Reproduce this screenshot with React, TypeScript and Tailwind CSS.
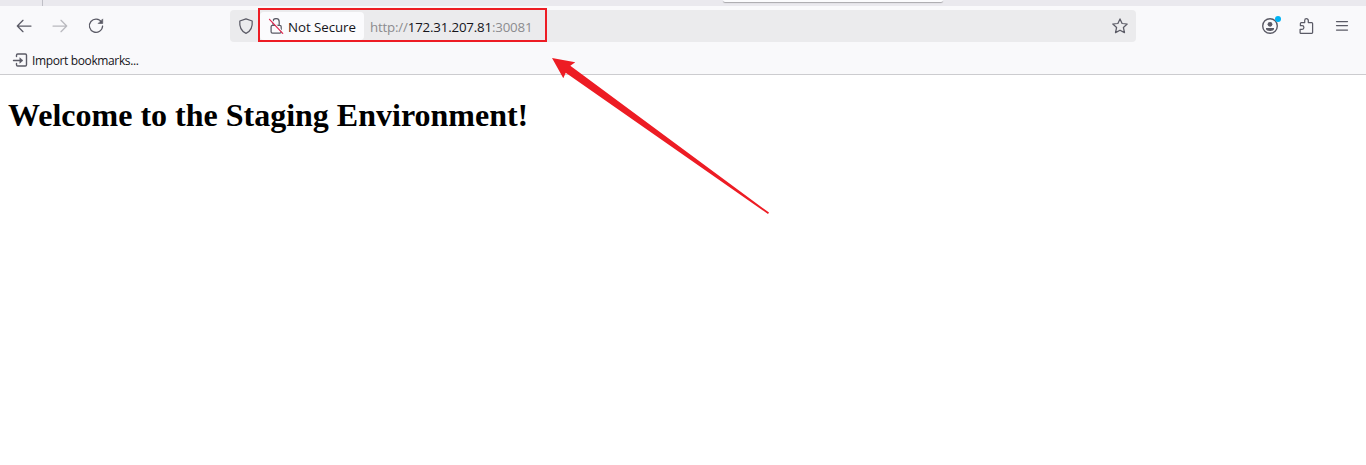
import React from "react";

type IconProps = { children: React.ReactNode; className?: string };

function Icon({ children, className = "" }: IconProps) {
  return (
    <svg
      viewBox="0 0 16 16"
      className={`h-4 w-4 shrink-0 ${className}`}
      fill="none"
      stroke="#5b5b66"
      strokeWidth="1.25"
      strokeLinecap="round"
      strokeLinejoin="round"
    >
      {children}
    </svg>
  );
}

function TabStrip() {
  return (
    <div className="flex h-1.5 shrink-0 bg-[#eae9ee]">
      <div className="h-1.5 w-[43px] shrink-0 border-r border-[#bfbfc6]" />
      <div className="ml-[680px] h-[2px] w-[220px] rounded-b-[3px] bg-[#fbfbfd] shadow-[0_1px_1px_rgba(0,0,0,0.28)]" />
    </div>
  );
}

function AddressBar() {
  return (
    <div className="ml-[126px] flex h-8 w-[906px] shrink-0 items-center rounded bg-[#ebebed] pr-2 pl-2">
      <Icon>
        <path d="M8 .8 14.2 3c.5 5.600-1.500 10.300-6.200 12.300C3.300 13.300 1.300 8.600 1.800 3Z" />
      </Icon>
      <div className="ml-1.5 flex h-7 w-[104px] shrink-0 items-center rounded bg-[#fbfbfd] pl-2">
        <Icon>
          <path d="M5 7.200V3.700a3.100 3.100 0 0 1 6.200 0v3.500M4.500 7.300h7.300a1.400 1.400 0 0 1 1.400 1.400v5a1.400 1.400 0 0 1-1.400 1.400H4.500a1.400 1.400 0 0 1-1.400-1.400v-5a1.400 1.400 0 0 1 1.400-1.400Z" />
          <path d="M2.100 .5 15.300 14.700" stroke="#fbfbfd" strokeWidth="1.200" />
          <path d="M1.500 1.300 14.700 15.400" stroke="#e22850" strokeWidth="1.200" />
        </Icon>
        <span className="ml-1 pt-[3px] text-[13.3px] tracking-[-0.05px] whitespace-nowrap text-[#15141a]">Not Secure</span>
      </div>
      <span className="ml-1.5 pt-[3px] text-[13.3px] tracking-[-0.18px] whitespace-nowrap text-[#8b8b8f]">
        http://<span className="text-[#15141a]">172.31.207.81</span>:30081
      </span>
      <Icon className="ml-auto">
        <path d="m8 .9 2.100 4.600 5.100.5-3.800 3.500 1.100 5.100L8 12.200l-4.500 2.400 1.100-5.100L.8 6l5.100-.5Z" />
      </Icon>
    </div>
  );
}

function NavigationBar() {
  return (
    <div className="flex h-10 shrink-0 items-center pl-4">
      <Icon>
        <path d="M15 8H1.300M7 2.300 1.300 8 7 13.700" />
      </Icon>
      <Icon className="ml-5 opacity-40">
        <path d="M1 8h13.700M9 2.300 14.700 8 9 13.700" />
      </Icon>
      <Icon className="ml-5">
        <path d="M13.600 4.200A6.600 6.600 0 1 0 14.600 8" />
        <path d="M14.700 1.300v4.200h-4.200Z" fill="#5b5b66" strokeWidth=".7" />
      </Icon>
      <AddressBar />
      <div className="relative ml-[126px] h-4 w-4 shrink-0">
        <Icon>
          <circle cx="8" cy="8" r="7.300" strokeWidth="1.400" />
          <circle cx="8" cy="6.300" r="2.400" fill="#5b5b66" stroke="none" />
          <path d="M4 10h8v1c0 1-1.800 2-4 2s-4-1-4-2Z" fill="#5b5b66" stroke="none" />
        </Icon>
        <span className="absolute -top-[2px] left-[13px] h-1.5 w-1.5 rounded-full bg-[#00b3f4]" />
      </div>
      <Icon className="ml-5">
        <path d="M2.700 15.400h11a.9.9 0 0 0 .9-.9V5.500a.9.9 0 0 0-.9-.9H10.300V2.500a1.800 1.800 0 0 0-3.600 0v2.100H3.300a.9.9 0 0 0-.9.9v2.200h1.700a1.800 1.800 0 0 1 0 3.600H2.100v3.500a.6.6 0 0 0 .6.600Z" />
      </Icon>
      <Icon className="ml-5">
        <path d="M2.500 3.500h11M2.500 7.500h11M2.500 12h11" />
      </Icon>
    </div>
  );
}

function BookmarksBar() {
  return (
    <div className="flex h-7 shrink-0 items-center pl-3">
      <Icon>
        <path d="M4.500 4.500V3.200A1.200 1.200 0 0 1 5.700 2h7.600A1.200 1.200 0 0 1 14.500 3.200v9.600a1.200 1.200 0 0 1-1.200 1.200H5.700a1.200 1.200 0 0 1-1.200-1.200V11.500M1.500 8.500h7.500" strokeWidth="1.400" />
        <path d="m8 6 2.900 2.500L8 11Z" fill="#5b5b66" strokeWidth=".6" />
      </Icon>
      <span className="ml-1 pt-[2px] text-[12px] tracking-[-0.37px] whitespace-nowrap text-[#15141a]">Import bookmarks...</span>
    </div>
  );
}

function Annotations() {
  return (
    <>
      <div className="pointer-events-none absolute top-2 left-[258px] h-[34px] w-[289px] border-2 border-[#ed1c24]" />
      <svg
        viewBox="552 58 218 157"
        className="pointer-events-none absolute top-[58px] left-[552px] h-[157px] w-[218px]"
      >
        <path d="M552 58 575.300 62.300 570.300 65.800 769 212.600 768 214 565.700 72.800 563.300 78.200Z" fill="#ed1c24" />
      </svg>
    </>
  );
}

export default function App() {
  return (
    <div className="relative flex h-[465px] w-[1366px] flex-col overflow-hidden bg-white font-['Open_Sans','Noto_Sans',sans-serif]">
      <TabStrip />
      <header className="flex h-[69px] shrink-0 flex-col border-b border-[#cccccf] bg-[#f9f9fb]">
        <NavigationBar />
        <BookmarksBar />
      </header>
      <main className="px-2 pt-[22px]">
        <h1 className="font-['Liberation_Serif',serif] text-[32px] leading-[37px] font-bold text-black">
          Welcome to the Staging Environment!
        </h1>
      </main>
      <Annotations />
    </div>
  );
}
